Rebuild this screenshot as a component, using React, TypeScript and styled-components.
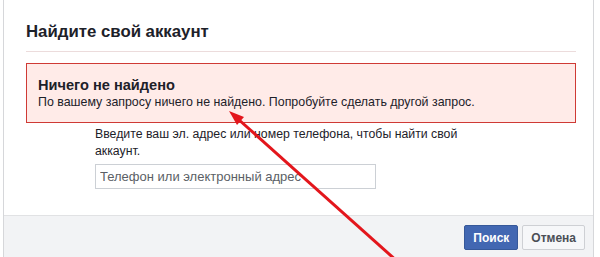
import React from "react";
import styled, { createGlobalStyle } from "styled-components";

const Global = createGlobalStyle`
  html, body { margin: 0; padding: 0; background: #ffffff; }
  body { font-family: "Liberation Sans", Arial, sans-serif; color: #1d2129; }
  * { box-sizing: border-box; }
`;

const Page = styled.div`
  position: relative;
  width: 600px;
  height: 257px;
  overflow: hidden;
  padding-left: 3px;
`;

const Panel = styled.div`
  width: 591px;
  height: 100%;
  border-left: 1px solid #d6d7da;
  border-right: 1px solid #d6d7da;
  display: flex;
  flex-direction: column;
`;

const Content = styled.div`
  padding: 22px 17px 26px 22px;
`;

const Title = styled.h2`
  margin: 0;
  font-size: 16.8px;
  line-height: 20px;
  font-weight: bold;
  color: #1d2129;
  padding-bottom: 9px;
  border-bottom: 1px solid #ecdcdc;
`;

const ErrorBox = styled.div`
  margin-top: 11px;
  background: #ffebe8;
  border: 1px solid #cf3a35;
  padding: 12px 11px;
`;

const ErrorTitle = styled.div`
  font-size: 14.6px;
  line-height: 18px;
  font-weight: bold;
  color: #1d2129;
`;

const ErrorText = styled.div`
  font-size: 12.4px;
  line-height: 16px;
  color: #1d2129;
`;

const Form = styled.div`
  margin: 3px 0 0 69px;
  width: 405px;
`;

const Hint = styled.div`
  font-size: 12.3px;
  line-height: 17px;
  color: #1d2129;
`;

const Field = styled.input`
  display: block;
  margin-top: 4px;
  width: 281px;
  height: 25px;
  border: 1px solid #ccd0d5;
  padding: 0 4px;
  font-family: "Liberation Sans", Arial, sans-serif;
  font-size: 13px;
  color: #1d2129;
  outline: none;
  &::placeholder { color: #5b5f66; }
`;

const Footer = styled.div`
  flex: 1;
  background: #f2f3f5;
  border-top: 1px solid #e1e2e4;
  display: flex;
  justify-content: flex-end;
  align-items: flex-start;
  gap: 4px;
  padding: 9px 8px 0 0;
`;

const Button = styled.button<{ $primary?: boolean }>`
  height: 25px;
  padding: 0 8px;
  font-family: "Liberation Sans", Arial, sans-serif;
  font-size: 12px;
  font-weight: bold;
  border-radius: 2px;
  border: 1px solid ${(p) => (p.$primary ? "#365899" : "#ced0d4")};
  background: ${(p) => (p.$primary ? "#4267b2" : "#f6f7f9")};
  color: ${(p) => (p.$primary ? "#ffffff" : "#4b4f56")};
`;

const Arrow = styled.svg`
  position: absolute;
  left: 0;
  top: 0;
  pointer-events: none;
`;

export default function App() {
  return (
    <Page>
      <Global />
      <Panel>
        <Content>
          <Title>Найдите свой аккаунт</Title>
          <ErrorBox>
            <ErrorTitle>Ничего не найдено</ErrorTitle>
            <ErrorText>
              По вашему запросу ничего не найдено. Попробуйте сделать другой запрос.
            </ErrorText>
          </ErrorBox>
          <Form>
            <Hint>
              Введите ваш эл. адрес или номер телефона, чтобы найти свой аккаунт.
            </Hint>
            <Field placeholder="Телефон или электронный адрес" />
          </Form>
        </Content>
        <Footer>
          <Button $primary>Поиск</Button>
          <Button>Отмена</Button>
        </Footer>
      </Panel>
      <Arrow width="600" height="257" viewBox="0 0 600 257">
        <line x1="238" y1="119" x2="398" y2="262" stroke="#e3161c" strokeWidth="3" />
        <polygon points="229,111 237,125 244,117" fill="#e3161c" />
      </Arrow>
    </Page>
  );
}
